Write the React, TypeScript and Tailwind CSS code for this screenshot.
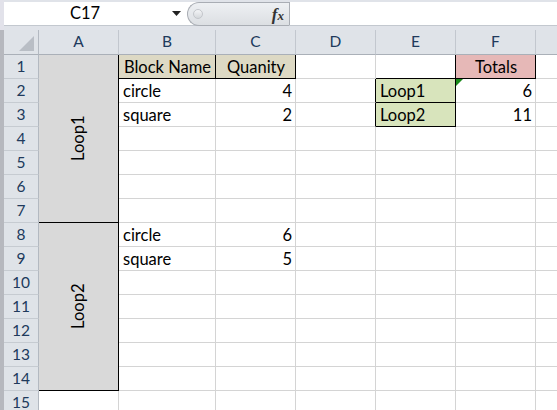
import React from "react";

const FONT = { fontFamily: "Lato, 'Open Sans', 'Liberation Sans', sans-serif" };

type CellDef = {
  text?: string;
  align?: "left" | "right" | "center";
  bg?: string;
  br?: boolean;
  bb?: boolean;
  tri?: boolean;
};

const cells: Record<string, CellDef> = {
  B1: { text: "Block Name", align: "center", bg: "bg-[#ddd9c4]", br: true, bb: true },
  C1: { text: "Quanity", align: "center", bg: "bg-[#ddd9c4]", br: true, bb: true },
  E1: { br: true, bb: true },
  F1: { text: "Totals", align: "center", bg: "bg-[#e6b8b7]", br: true, bb: true },
  B2: { text: "circle" },
  C2: { text: "4", align: "right" },
  D2: { br: true },
  E2: { text: "Loop1", bg: "bg-[#d8e4bc]", br: true, bb: true },
  F2: { text: "6", align: "right", tri: true },
  B3: { text: "square" },
  C3: { text: "2", align: "right" },
  D3: { br: true },
  E3: { text: "Loop2", bg: "bg-[#d8e4bc]", br: true, bb: true },
  F3: { text: "11", align: "right" },
  B8: { text: "circle" },
  C8: { text: "6", align: "right" },
  B9: { text: "square" },
  C9: { text: "5", align: "right" },
};

const COLS = ["A", "B", "C", "D", "E", "F", "G"];

function Cell({ id }: { id: string }) {
  const d = cells[id] || {};
  const cls = [
    "relative flex items-center border-r border-b text-[16.5px] text-black whitespace-nowrap overflow-hidden px-[4px] pr-[3px]",
    d.br ? "border-r-black" : "border-r-[#d4d4d4]",
    d.bb ? "border-b-black" : "border-b-[#d4d4d4]",
    d.bg ? d.bg : "bg-white",
    d.align === "right" ? "justify-end" : d.align === "center" ? "justify-center" : "justify-start",
  ].join(" ");
  return (
    <div className={cls}>
      {d.tri && (
        <svg className="absolute left-0 top-0" width="7" height="7" viewBox="0 0 7 7">
          <polygon points="0,0 7,0 0,7" fill="#1a8a1a" />
        </svg>
      )}
      {d.text && <span className="leading-[24px] pt-[1px]">{d.text}</span>}
    </div>
  );
}

function MergedA({ label }: { label: string }) {
  return (
    <div className="row-span-7 flex items-center justify-center bg-[#d9d9d9] border-r border-b border-r-black border-b-black overflow-hidden">
      <span className="-rotate-90 whitespace-nowrap text-[16.5px] text-black leading-none">{label}</span>
    </div>
  );
}

export default function App() {
  const rows: React.ReactNode[] = [];
  for (let r = 1; r <= 15; r++) {
    rows.push(
      <div
        key={`rh${r}`}
        className="flex items-center justify-center bg-[#dfe3e8] border-r border-b border-r-[#b3b9c1] border-b-[#c6cbd1] text-[15.5px] text-[#203a5c]"
      >
        {r}
      </div>
    );
    if (r === 1) rows.push(<MergedA key="mA1" label="Loop1" />);
    if (r === 8) rows.push(<MergedA key="mA8" label="Loop2" />);
    for (const c of COLS) {
      if (c === "A" && r <= 14) continue;
      rows.push(<Cell key={`${c}${r}`} id={`${c}${r}`} />);
    }
  }

  return (
    <div className="flex w-[557px] h-[410px] overflow-hidden bg-[#e0e3e9]" style={FONT}>
      <div className="flex flex-col w-[4px] shrink-0">
        <div className="h-[30px] bg-[#e2e2ea]" />
        <div className="flex-1 bg-[#b6b8be]" />
      </div>
      <div className="flex flex-col flex-1 min-w-0 overflow-hidden">
        {/* formula bar */}
        <div className="h-[30px] pt-[2px] shrink-0">
          <div className="flex h-[24px] bg-white border-b border-b-[#c3c8cf]">
            <div className="w-[162px] flex items-center justify-center text-[16.5px] text-black">C17</div>
            <div className="w-[21px] flex items-center justify-center">
              <svg width="9" height="5" viewBox="0 0 9 5">
                <polygon points="0,0 9,0 4.5,5" fill="#222" />
              </svg>
            </div>
            <div className="w-[102px] h-[24px] flex items-center rounded-l-full border border-r-0 border-[#a9adb4] bg-gradient-to-b from-[#eef0f3] to-[#dcdfe3]">
              <div className="ml-[5px] w-[10px] h-[10px] rounded-full border border-[#c3c6cb] bg-gradient-to-b from-[#f4f5f7] to-[#d5d8dc]" />
              <div className="flex-1" />
              <span
                className="mr-[5px] italic text-[17px] text-[#333] leading-none font-bold"
                style={{ fontFamily: "'Liberation Serif', 'DejaVu Serif', serif" }}
              >
                f<span className="text-[13px]">x</span>
              </span>
            </div>
            <div className="flex-1 border-l border-l-[#a9adb4] bg-white" />
          </div>
        </div>
        {/* grid */}
        <div className="flex-1 overflow-hidden">
          <div className="grid grid-cols-[35px_80px_97px_80px_80px_80px_80px_80px] grid-rows-[25px] auto-rows-[24px] w-max">
            <div className="relative bg-[#dfe3e8] border-r border-b border-r-[#b3b9c1] border-b-[#aab0b8]">
              <svg className="absolute right-[4px] bottom-[3px]" width="15" height="15" viewBox="0 0 15 15">
                <polygon points="15,0 15,15 0,15" fill="#b9bec5" />
              </svg>
            </div>
            {COLS.map((c) => (
              <div
                key={`h${c}`}
                className="flex items-center justify-center bg-[#dfe3e8] border-r border-b border-r-[#c2c7ce] border-b-[#aab0b8] text-[15.5px] text-[#203a5c]"
              >
                {c === "G" ? "" : c}
              </div>
            ))}
            {rows}
          </div>
        </div>
      </div>
    </div>
  );
}
